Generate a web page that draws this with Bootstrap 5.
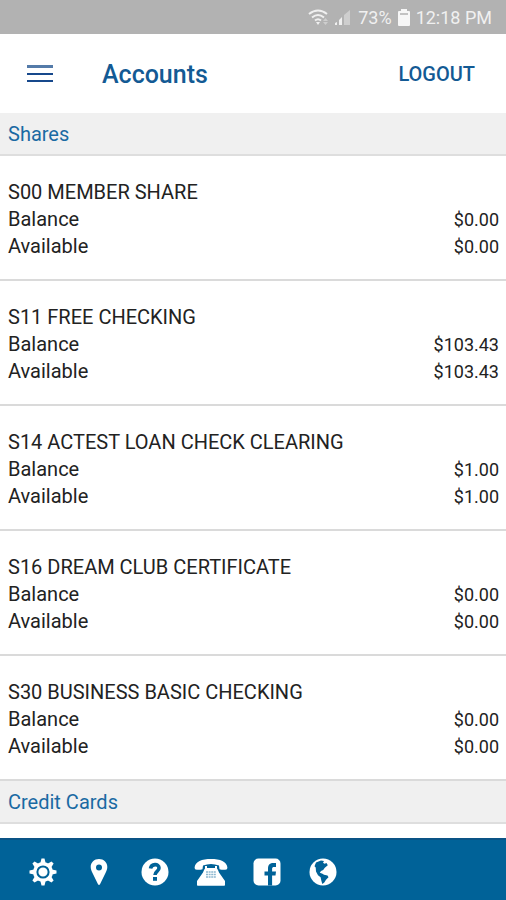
<!DOCTYPE html>
<html lang="en">
<head>
<meta charset="utf-8">
<meta name="viewport" content="width=device-width, initial-scale=1">
<title>Accounts</title>
<link href="https://cdn.jsdelivr.net/npm/bootstrap@5.3.0/dist/css/bootstrap.min.css" rel="stylesheet">
<style>
body{font-family:Roboto,"Liberation Sans",sans-serif;font-size:20px;line-height:27px;color:#222}
.status-bar{background:#b2b2b2;color:#f0f0f0;height:34px;padding:1px 14px 0 0;font-size:18px;gap:5px}
.app-bar{height:79px;padding:2px 23px 0}
.menu-btn{width:34px}
.page-title{font-size:25px;line-height:32px;color:#135a94;margin-left:45px}
.logout{color:#135a94;font-size:20px;line-height:27px}
.section-title{background:#f0f0f0;color:#1a6aa3;font-size:20px;line-height:27px;padding:8px 8px 6px;border-bottom:2px solid #dedede}
.account{padding:23px 7px 19px 8px;border-bottom:2px solid #dadada}
.account-name{font-size:20px;line-height:27px}
.amount{font-size:18px}
.tab-bar{background:#006298;border-top:2px solid #0a5386;height:62px;padding:4px 15px 0}
.tab-bar .btn{width:56px;height:44px}
</style>
<script src="https://cdn.jsdelivr.net/npm/bootstrap@5.3.0/dist/js/bootstrap.bundle.min.js" defer></script>
</head>
<body class="bg-white">
<div class="d-flex flex-column min-vh-100">
  <div class="status-bar d-flex align-items-center justify-content-end">
    <svg width="45" height="20" viewBox="0 0 45 20" aria-hidden="true">
      <g fill="none" stroke="#f0f0f0" stroke-width="2"><path d="M1 6Q10-1 19 6M4 9.500Q10 4.500 16 9.500M7 12.500Q10 10 13 12.500"/></g>
      <path d="M8 14h4l-2 3z" fill="#f0f0f0"/><path d="M15 13l2.500-3 2.500 3zM15 14l2.500 3 2.500-3z" fill="#cecece"/>
      <path d="M27 17v-2l2-1v3zM31 17v-5l3-3v8z" fill="#f0f0f0"/><path d="M36 17V7l6-5v15z" fill="#cecece"/>
    </svg>
    <span>73%</span>
    <svg width="14" height="20" viewBox="0 0 14 20" aria-hidden="true"><path d="M4 1h6v2h2q1 0 1 1v13q0 1-1 1H2q-1 0-1-1V4q0-1 1-1h2z" fill="#f6f6f6"/><path d="M3 5h8v2H3z" fill="#c2c2c2"/></svg>
    <span>12:18 PM</span>
  </div>

  <header class="app-bar d-flex align-items-center">
    <button type="button" class="menu-btn btn p-0 border-0 d-flex justify-content-center" aria-label="Menu">
      <svg width="26" height="20" viewBox="0 0 26 20"><path d="M0 0h26v3H0z" fill="#547ba9"/><path d="M0 8h26v2H0zM0 15h26v2H0z" fill="#17488c"/></svg>
    </button>
    <h1 class="page-title fw-medium mb-0">Accounts</h1>
    <a href="#" class="logout fw-medium text-decoration-none ms-auto px-2">LOGOUT</a>
  </header>

  <main>
    <h2 class="section-title fw-normal mb-0">Shares</h2>
    <section class="account">
      <h3 class="account-name fw-normal mb-0">S00 MEMBER SHARE</h3>
      <div class="d-flex justify-content-between"><span>Balance</span><span class="amount">$0.00</span></div>
      <div class="d-flex justify-content-between"><span>Available</span><span class="amount">$0.00</span></div>
    </section>
    <section class="account">
      <h3 class="account-name fw-normal mb-0">S11 FREE CHECKING</h3>
      <div class="d-flex justify-content-between"><span>Balance</span><span class="amount">$103.43</span></div>
      <div class="d-flex justify-content-between"><span>Available</span><span class="amount">$103.43</span></div>
    </section>
    <section class="account">
      <h3 class="account-name fw-normal mb-0">S14 ACTEST LOAN CHECK CLEARING</h3>
      <div class="d-flex justify-content-between"><span>Balance</span><span class="amount">$1.00</span></div>
      <div class="d-flex justify-content-between"><span>Available</span><span class="amount">$1.00</span></div>
    </section>
    <section class="account">
      <h3 class="account-name fw-normal mb-0">S16 DREAM CLUB CERTIFICATE</h3>
      <div class="d-flex justify-content-between"><span>Balance</span><span class="amount">$0.00</span></div>
      <div class="d-flex justify-content-between"><span>Available</span><span class="amount">$0.00</span></div>
    </section>
    <section class="account">
      <h3 class="account-name fw-normal mb-0">S30 BUSINESS BASIC CHECKING</h3>
      <div class="d-flex justify-content-between"><span>Balance</span><span class="amount">$0.00</span></div>
      <div class="d-flex justify-content-between"><span>Available</span><span class="amount">$0.00</span></div>
    </section>
    <h2 class="section-title fw-normal mb-0">Credit Cards</h2>
  </main>

  <nav class="tab-bar sticky-bottom mt-auto d-flex align-items-center" aria-label="Tools">
    <button type="button" class="btn p-0 border-0" aria-label="Settings">
      <svg width="28" height="28" viewBox="-14 -14 28 28">
        <g fill="#fff"><g id="teeth"><path id="tooth" d="M-2.600-9L-1.500-13.500h3L2.600-9v18L1.500 13.500h-3L-2.600 9z"/><use href="#tooth" transform="rotate(45)"/></g><use href="#teeth" transform="rotate(90)"/><circle r="10"/></g>
        <circle r="5.600" fill="none" stroke="#006298" stroke-width="2"/>
      </svg>
    </button>
    <button type="button" class="btn p-0 border-0" aria-label="Locations">
      <svg width="18" height="28" viewBox="0 0 18 28"><path fill="#fff" fill-rule="evenodd" d="M9 1C4.300 1 .7 4.500.7 9c0 2 .8 4 1.800 6L8 26.300q1 1.400 2 0L15.500 15c1-2 1.800-4 1.800-6C17.300 4.500 13.700 1 9 1zm0 5.500a3 3 0 1 1 0 6 3 3 0 0 1 0-6z"/></svg>
    </button>
    <button type="button" class="btn p-0 border-0" aria-label="Help">
      <svg width="28" height="28" viewBox="0 0 28 28"><circle cx="14" cy="14" r="13.500" fill="#fff"/><path d="M9.500 10.500C10.200 5.500 18 5.300 18 10c0 3.500-4 3.200-4 7" fill="none" stroke="#006298" stroke-width="3.600"/><path d="M12 19h4v3.800h-4z" fill="#006298"/></svg>
    </button>
    <button type="button" class="btn p-0 border-0" aria-label="Call us">
      <svg width="34" height="28" viewBox="0 0 34 28">
        <path fill="#fff" d="M.6 9.500C1 3.500 8 1 17 1s16 2.500 16.400 8.500l-.4 1.800q-3.500 1-7.500 0L25 7.500Q17 4.500 9 7.500l-.5 3.800q-4 1-7.500 0z"/>
        <path fill="#fff" d="M11 8h2v2h8V8h2v2.500q1 1 2 4l6 8.500v4q0 .8-.8.800H3.800Q3 27.800 3 27v-4l6-8.500q1-3 2-4z"/>
        <path d="M12 14h10M12 16.500h10M12 19h10" stroke="#8db8d0" stroke-width="1.500" stroke-dasharray="2 .6"/>
      </svg>
    </button>
    <button type="button" class="btn p-0 border-0" aria-label="Facebook">
      <svg width="28" height="28" viewBox="0 0 28 28"><rect x=".5" y=".5" width="27" height="27" rx="5" fill="#fff"/><path fill="#006298" d="M15 27.500V17.500h-3.500v-4H15v-3c0-3.800 2.200-5.500 5.300-5.500H23v4h-1.800c-1.400 0-2.100.6-2.100 2v2.500H23l-.5 4h-3.400v10z"/></svg>
    </button>
    <button type="button" class="btn p-0 border-0" aria-label="Website">
      <svg width="28" height="28" viewBox="0 0 28 28"><circle cx="14" cy="14" r="13.500" fill="#fff"/><path fill="#006298" d="M7 4.500l5-2 3 .5-1 1.700 1.500 1 2-.8 1.300 2.300-3 2.500-1.600 2.300-2.200 1-1.200 1.800 2.700 1 1.500 1 3.500.8 1 1.700-2.500 2.500-1.700 2.700-2 1.500-1-3.500-.7-3.200-2.600-2-2-3.800-.3-4-1.200-1.200z"/></svg>
    </button>
  </nav>
</div>
</body>
</html>
